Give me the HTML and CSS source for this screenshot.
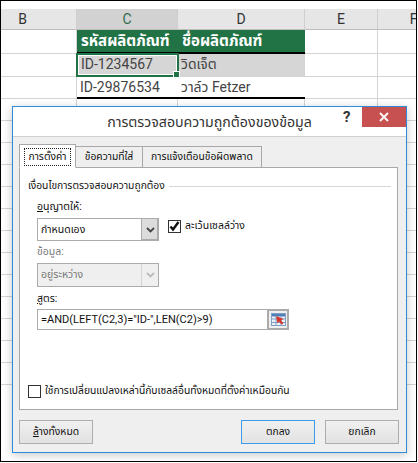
FILE: index.html
```html
<!DOCTYPE html>
<html lang="th">
<head>
<meta charset="utf-8">
<title>การตรวจสอบความถูกต้องของข้อมูล</title>
<link rel="stylesheet" href="styles.css">
</head>
<body>
<div class="frame">
  <div class="sheet">
    <div class="sheet-top"></div>
    <div class="grid">
      <div class="hd hd-b">B</div><div class="hd hd-on">C</div><div class="hd">D</div><div class="hd">E</div><div class="hd">F</div>

      <div class="c"></div><div class="c th">รหัสผลิตภัณฑ์</div><div class="c th">ชื่อผลิตภัณฑ์</div><div class="c"></div><div class="c"></div>

      <div class="c"></div><div class="c td sel active">ID-1234567<span class="handle"></span></div><div class="c td sel">วิดเจ็ต</div><div class="c"></div><div class="c"></div>

      <div class="c"></div><div class="c td last">ID-29876534</div><div class="c td last">วาล์ว Fetzer</div><div class="c"></div><div class="c"></div>

      <div class="c"></div><div class="c"></div><div class="c"></div><div class="c"></div><div class="c"></div>
      <div class="c"></div><div class="c"></div><div class="c"></div><div class="c"></div><div class="c"></div>
      <div class="c"></div><div class="c"></div><div class="c"></div><div class="c"></div><div class="c"></div>
      <div class="c"></div><div class="c"></div><div class="c"></div><div class="c"></div><div class="c"></div>
      <div class="c"></div><div class="c"></div><div class="c"></div><div class="c"></div><div class="c"></div>
      <div class="c"></div><div class="c"></div><div class="c"></div><div class="c"></div><div class="c"></div>
      <div class="c"></div><div class="c"></div><div class="c"></div><div class="c"></div><div class="c"></div>
      <div class="c"></div><div class="c"></div><div class="c"></div><div class="c"></div><div class="c"></div>
      <div class="c"></div><div class="c"></div><div class="c"></div><div class="c"></div><div class="c"></div>
      <div class="c"></div><div class="c"></div><div class="c"></div><div class="c"></div><div class="c"></div>
      <div class="c"></div><div class="c"></div><div class="c"></div><div class="c"></div><div class="c"></div>
      <div class="c"></div><div class="c"></div><div class="c"></div><div class="c"></div><div class="c"></div>
      <div class="c"></div><div class="c"></div><div class="c"></div><div class="c"></div><div class="c"></div>
    </div>
  </div>

  <div class="dialog">
    <div class="titlebar">
      <div class="title">การตรวจสอบความถูกต้องของข้อมูล</div>
      <div class="help">?</div>
      <div class="close">
        <svg width="10" height="10" viewBox="0 0 10 10"><path d="M1 1 9 9M9 1 1 9" stroke="#fff" stroke-width="1.8" fill="none"/></svg>
      </div>
    </div>
    <div class="body">
      <div class="tabs">
        <div class="tab tab-on"><span class="focus">การตั้งค่า</span></div>
        <div class="tab tab-2">ข้อความที่ใส่</div>
        <div class="tab tab-3">การแจ้งเตือนข้อผิดพลาด</div>
      </div>
      <div class="panel">
        <div class="legend"><span>เงื่อนไขการตรวจสอบความถูกต้อง</span><i class="rule"></i></div>
        <div class="fields">
          <div class="lbl"><u>อ</u>นุญาตให้:</div>
          <div class="row">
            <div class="select">
              <span class="val">กำหนดเอง</span>
              <span class="arrow"><svg width="9" height="6" viewBox="0 0 9 6"><path d="M1 1 4.500 4.500 8 1" stroke="#444" stroke-width="1.800" fill="none"/></svg></span>
            </div>
            <label class="check-row">
              <span class="box"><svg width="11" height="11" viewBox="0 0 11 11"><path d="M1.500 5.500 4 8.500 9.500 1" stroke="#111" stroke-width="2.400" fill="none"/></svg></span>
              <span>ละเว้นเซลล์ว่าง</span>
            </label>
          </div>
          <div class="lbl lbl-off lbl-2">ข้อมูล:</div>
          <div class="select select-off">
            <span class="val">อยู่ระหว่าง</span>
            <span class="arrow"><svg width="9" height="6" viewBox="0 0 9 6"><path d="M1 1 4.500 4.500 8 1" stroke="#bbb" stroke-width="1.800" fill="none"/></svg></span>
          </div>
          <div class="lbl lbl-3"><u>ส</u>ูตร:</div>
          <div class="formula">
            <div class="input">=AND(LEFT(C2,3)="ID-",LEN(C2)&gt;9)</div>
            <div class="picker">
              <svg width="15" height="13" viewBox="0 0 15 13">
                <rect x="0.500" y="0.500" width="14" height="12" fill="#eaf1f9" stroke="#7f9fc4"/>
                <rect x="1" y="1" width="13" height="2.500" fill="#4f7fb8"/>
                <path d="M1 6H14M1 9.500H14M5 3.500V12M10 3.500V12" stroke="#7f9fc4" stroke-width="1"/>
                <path d="M5 3 12.500 6 10 7.500 12.500 10.500 10.500 11.500 8 8.500 6.500 10.500Z" fill="#d8352a"/>
              </svg>
            </div>
          </div>
        </div>
        <label class="apply">
          <span class="box box-empty"></span>
          <span>ใช้การเปลี่ยนแปลงเหล่านี้กับเซลล์อื่นทั้งหมดที่ตั้งค่าเหมือนกัน</span>
        </label>
      </div>
      <div class="buttons">
        <div class="btn"><span><u>ล</u>้างทั้งหมด</span></div>
        <div class="spacer"></div>
        <div class="btn btn-def">ตกลง</div>
        <div class="btn">ยกเลิก</div>
      </div>
    </div>
  </div>
</div>
</body>
</html>
```

FILE: styles.css
```css
* { box-sizing: border-box; }
html, body { margin: 0; padding: 0; }
body {
  width: 418px;
  height: 463px;
  overflow: hidden;
  background: #fff;
  font-family: Roboto, "Noto Sans Thai", "Noto Sans", "Liberation Sans", sans-serif;
  color: #222;
}
.frame {
  position: relative;
  width: 417px;
  height: 462px;
  border: 1px solid #000;
  overflow: hidden;
  background: #fff;
}
.sheet-top { height: 8px; background: #fff; }
.grid {
  display: grid;
  grid-template-columns: 76px 101px 127px 73px 72px;
  grid-template-rows: 21px 24px 23px 22px repeat(13, 22px);
}
.hd {
  background: #e6e6e6;
  border-right: 1px solid #cfcfcf;
  border-bottom: 1px solid #bdbdbd;
  font-size: 14px;
  line-height: 21px;
  text-align: center;
  color: #333;
}
.hd-b { padding-right: 32px; }
.hd-on { background: #d2d2d2; color: #2f6b4c; }
.c {
  border-right: 1px solid #d4d4d4;
  border-bottom: 1px solid #d4d4d4;
  position: relative;
  white-space: nowrap;
}
.th {
  background: #217346;
  color: #fff;
  font-weight: 700;
  font-size: 15px;
  line-height: 22px;
  padding-left: 4px;
  border: 0;
  border-bottom: 2px solid #000;
}
.td { font-size: 14px; color: #444; line-height: 21px; padding-left: 3px; }
.sel { background: #d6d6d6; }
.last { border-bottom: 2px solid #000; border-right: 0; }
.active {
  border: 2px solid #217346;
  box-shadow: inset 0 0 0 1px #fff;
  line-height: 19px;
  margin: -1px -1px 0 -1px;
  padding-left: 3px;
  z-index: 1;
}
.handle {
  position: absolute;
  right: -3px;
  bottom: -3px;
  width: 7px;
  height: 7px;
  background: #217346;
  border: 1px solid #fff;
}
.dialog {
  position: absolute;
  left: 11px;
  top: 105px;
  width: 395px;
  height: 347px;
  border: 1px solid #2f8ad8;
  background: #efefef;
  box-shadow: 0 2px 9px rgba(0, 0, 0, .22);
  display: flex;
  flex-direction: column;
}
.titlebar {
  position: relative;
  height: 30px;
  background: #fff;
  border-bottom: 1px solid #d0d0d0;
  flex: none;
}
.title {
  font-size: 14.200px;
  line-height: 31px;
  text-align: center;
  color: #333;
}
.help {
  position: absolute;
  left: 330px;
  top: 1px;
  font-size: 15px;
  font-weight: 700;
  color: #333;
  line-height: 18px;
}
.close {
  position: absolute;
  right: 0;
  top: 0;
  width: 44px;
  height: 20px;
  background: #c75050;
  display: flex;
  align-items: center;
  justify-content: center;
}
.body { padding: 7px 8px 0 6px; flex: 1; display: flex; flex-direction: column; }
.tabs { display: flex; height: 24px; align-items: flex-end; position: relative; z-index: 1; }
.tab {
  height: 22px;
  font-size: 10.300px;
  line-height: 20px;
  text-align: center;
  border: 1px solid #a8a8a8;
  border-left: 0;
  background: #efefef;
  color: #111;
  white-space: nowrap;
}
.tab-2 { width: 67px; }
.tab-3 { width: 119px; }
.tab-on {
  height: 24px;
  width: 57px;
  border-left: 1px solid #a8a8a8;
  border-bottom: 1px solid #fff;
  background: #fff;
  padding: 3px 4px 0;
  line-height: 17px;
}
.focus { display: block; border: 1px dotted #222; height: 18px; text-align: center; line-height: 15px; }
.panel {
  background: #fff;
  border: 1px solid #a8a8a8;
  height: 243px;
  margin-top: -1px;
  padding: 9px 6px 0 8px;
  display: flex;
  flex-direction: column;
}
.legend { display: flex; align-items: center; gap: 4px; font-size: 10.300px; line-height: 18px; color: #111; }
.rule { flex: 1; height: 1px; background: #d6d6d6; }
.fields { padding-left: 9px; margin-top: 4px; }
.lbl { font-size: 10.500px; line-height: 16px; color: #111; }
.lbl-off { color: #777; }
.lbl-2 { margin-top: 3px; }
.lbl-3 { margin-top: 4px; }
.row { display: flex; gap: 9px; align-items: flex-start; margin-top: 3px; }
.select {
  width: 122px;
  height: 23px;
  border: 1px solid #ababab;
  background: #fff;
  display: flex;
  font-size: 10.500px;
  line-height: 21px;
}
.val { flex: 1; padding-left: 3px; color: #111; }
.arrow {
  width: 17px;
  background: #dcdcdc;
  border-left: 1px solid #ababab;
  box-shadow: inset -1px -1px 0 #ababab;
  display: flex;
  align-items: center;
  justify-content: center;
}
.select-off { background: #efefef; margin-top: 3px; height: 24px; line-height: 22px; }
.select-off .val { color: #777; }
.select-off .arrow { background: #efefef; border-left-color: #d4d4d4; box-shadow: none; }
.check-row { display: flex; align-items: center; gap: 4px; font-size: 10.500px; color: #111; height: 14px; margin-top: 1px; }
.box {
  width: 13px;
  height: 13px;
  border: 1px solid #333;
  background: #fff;
  display: block;
  flex: none;
}
.box svg { display: block; }
.formula { display: flex; margin-top: 2px; width: 252px; height: 21px; }
.input {
  width: 231px;
  border: 1px solid #ababab;
  background: #fff;
  font-size: 11px;
  line-height: 19px;
  padding-left: 3px;
  color: #111;
  white-space: nowrap;
}
.picker {
  width: 21px;
  background: #efefef;
  border: 2px solid #ababab;
  border-left: 1px solid #ababab;
  display: flex;
  align-items: center;
  justify-content: center;
}
.apply {
  display: flex;
  align-items: center;
  gap: 4px;
  font-size: 10.300px;
  line-height: 16px;
  color: #111;
  margin-top: auto;
  margin-bottom: 10px;
  white-space: nowrap;
}
.buttons { display: flex; gap: 10px; margin-top: 10px; margin-right: -1px; }
.spacer { flex: 1; }
.btn {
  width: 74px;
  height: 24px;
  border: 1px solid #adadad;
  background: linear-gradient(#f0f0f0, #e2e2e2);
  font-size: 10.300px;
  line-height: 22px;
  text-align: center;
  color: #111;
}
.btn-def { border-color: #3c9bea; }
```
